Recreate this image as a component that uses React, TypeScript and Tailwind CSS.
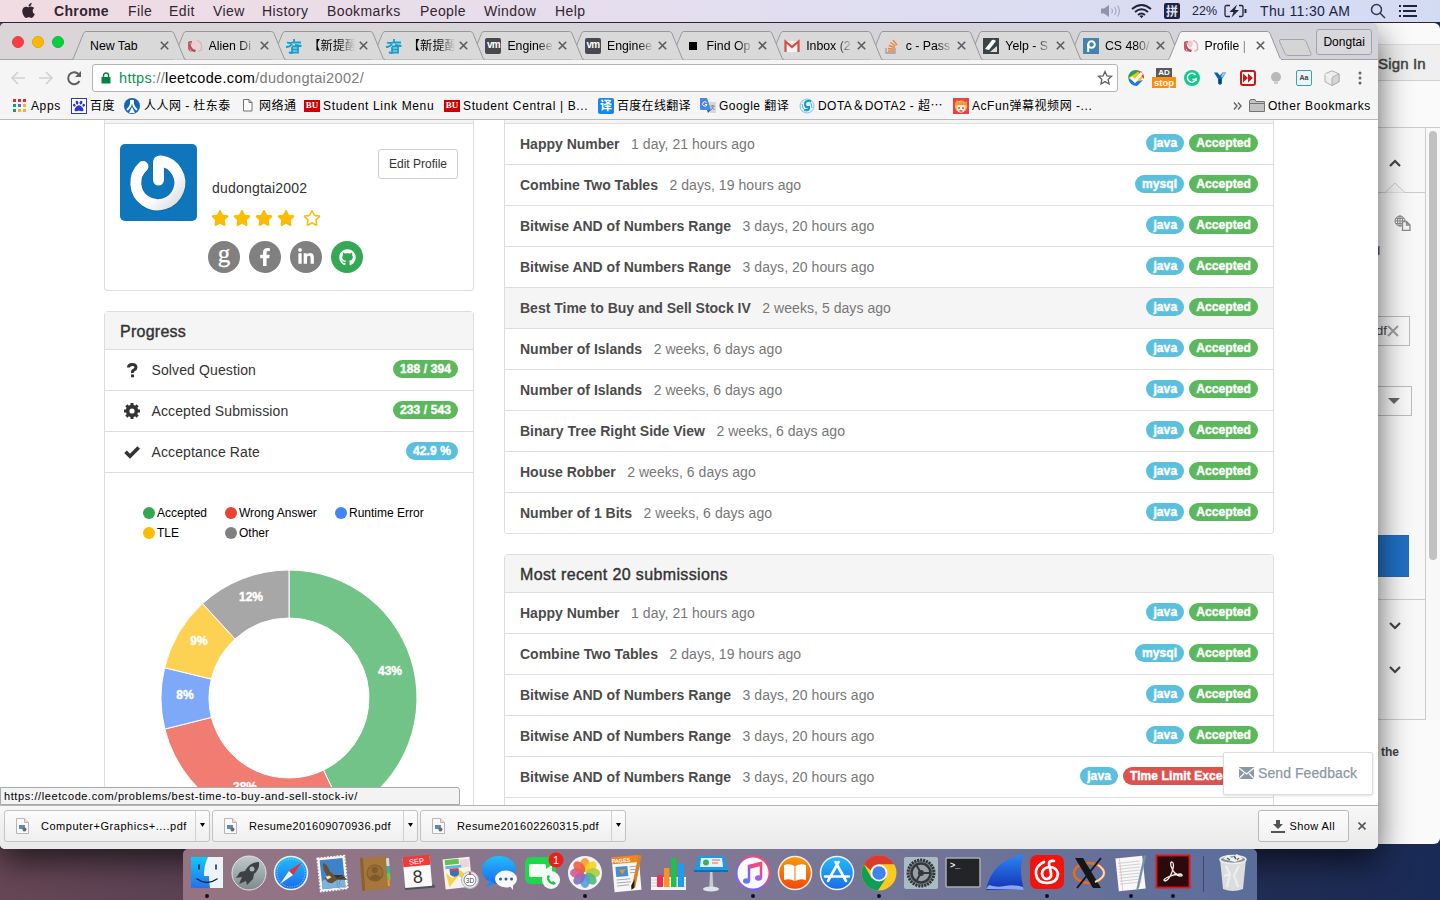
import React from "react";
import { FaApple, FaFacebookF, FaGithub, FaLinkedinIn, FaPaw, FaRegStar, FaStar } from "react-icons/fa";

/* ---------- macOS menu bar ---------- */

const menus = [
  { label: "Chrome", cls: "w-[74px] font-bold tracking-[0.35px]" },
  { label: "File", cls: "w-[41px]" },
  { label: "Edit", cls: "w-[44px]" },
  { label: "View", cls: "w-[49px]" },
  { label: "History", cls: "w-[65px]" },
  { label: "Bookmarks", cls: "w-[93px]" },
  { label: "People", cls: "w-[64px]" },
  { label: "Window", cls: "w-[71px]" },
  { label: "Help", cls: "w-[60px]" },
];

function MenuBar() {
  return (
    <header className="relative z-30 flex h-[23px] items-center border-b border-[#2b2338] bg-gradient-to-r from-[#f0dce2] via-[#e3def0] to-[#d3dbf3] text-[14px] tracking-[0.4px] whitespace-nowrap text-[#33242e]">
      <FaApple className="mr-[17px] mb-[2px] ml-[20px] h-[17px] w-[17px]" />
      {menus.map((m) => (
        <span key={m.label} className={m.cls}>
          {m.label}
        </span>
      ))}
      <div className="ml-auto flex items-center text-[#20233f]">
        <svg className="mr-[9px] h-[16px] w-[22px]" viewBox="0 0 22 16" fill="none" stroke="#a5abc4" strokeWidth="1.2">
          <path d="M1 5.500h3l5-3.500v12l-5-3.500h-3z" fill="#8f94ad" stroke="none" />
          <path d="M11.500 5.500q1.800 2.500 0 5M14.500 4q3 4 0 8M17.500 2.500q4 5.500 0 11" />
        </svg>
        <svg className="mr-[12px] h-[16px] w-[21px]" viewBox="0 0 21 16" fill="none" stroke="#20233f" strokeWidth="2">
          <path d="M1 6q9.500-8 19 0M4 9q6.500-5.500 13 0M7 12q3.500-3 7 0" />
          <path d="M8.500 13l2 2.200 2-2.200q-2-1.600-4 0z" fill="#20233f" stroke="none" />
        </svg>
        <span className="mr-[12px] flex h-[16px] w-[16px] items-center justify-center rounded-[2px] bg-[#20233f] font-['Noto_Sans_CJK_SC',sans-serif] text-[12px] leading-none font-bold tracking-normal text-[#dce0f3]">
          拼
        </span>
        <span className="w-[32px] text-[12.5px] tracking-normal">22%</span>
        <svg className="mr-[14px] h-[16px] w-[23px]" viewBox="0 0 23 16" fill="none" stroke="#20233f" strokeWidth="1.300">
          <path d="M6 2.500H2.500q-1.500 0-1.500 1.500v8q0 1.500 1.500 1.500H6M15 2.500h2.500q1.500 0 1.500 1.500v8q0 1.500-1.500 1.500H15" />
          <path d="M13 1.500L5.500 9h4L7.500 14.500 15 7h-4z" fill="#20233f" stroke="none" />
          <path d="M21.500 6v4" strokeWidth="2" />
        </svg>
        <span className="-ml-px mr-px w-[109px] tracking-[0.35px]">Thu 11:30 AM</span>
        <svg className="mr-[13px] h-[16px] w-[16px]" viewBox="0 0 16 16" fill="none" stroke="#33374f" strokeWidth="1.500">
          <circle cx="6.500" cy="6.500" r="5" />
          <path d="M10 10l5 5" />
        </svg>
        <svg className="mr-[22px] h-[12px] w-[19px]" viewBox="0 0 19 12" fill="#20233f">
          <path d="M0 0h2v2H0zM0 5h2v2H0zM0 10h2v2H0zM4 0h14v2H4zM4 5h13v2H4zM4 10h14v2H4z" />
        </svg>
      </div>
    </header>
  );
}

/* ---------- tab strip ---------- */

function LeetIcon() {
  return (
    <svg className="h-4 w-4" viewBox="0 0 16 16">
      <path d="M1 4l2-1 1 5-1 4 2 2q-4-1-4-4z" fill="#c8596c" />
      <path d="M5 3q5-2 5 3l-2 4q-3-1-3-3z" fill="#eecdd1" />
      <path d="M3 7l3 4 3 1-1 2q-4 0-5-4z" fill="#b9475a" />
      <path d="M3 3h2l-1 4z" fill="#b9475a" />
      <path d="M10 2.500q4 1 4.500 5v4l-3 2" fill="none" stroke="#e3b3b9" strokeWidth="1.500" />
    </svg>
  );
}
function FishIcon() {
  return (
    <svg className="h-4 w-4" viewBox="0 0 16 16" fill="none" stroke="#12a0d0" strokeWidth="1.800">
      <path d="M1 4.500q3 1 6 0h8M8 1v3.500M0 9q4 0 6-3M15.500 8L9 7M6 9v5.500h6V8.500H6M6 11.500h6M8 14q-3 2-5 0" />
    </svg>
  );
}
function VmIcon() {
  return (
    <span className="flex h-4 w-4 items-center justify-center rounded-[2px] bg-[#47494f] pb-[2px] text-[10px] leading-none font-bold tracking-[-0.8px] text-white">
      vm
    </span>
  );
}
function SquareIcon() {
  return <span className="ml-[4px] block h-[8px] w-[8px] bg-black" />;
}
function GmailIcon() {
  return (
    <svg className="h-4 w-4" viewBox="0 0 16 16">
      <path d="M1 3h14v11H1z" fill="#f3f3f3" />
      <path d="M1.500 14V3.500L8 9l6.500-5.500V14" fill="none" stroke="#d94b3f" strokeWidth="2.200" />
    </svg>
  );
}
function StackIcon() {
  return (
    <svg className="h-4 w-4" viewBox="0 0 16 16" fill="none">
      <path d="M2 10v5h9v-5" stroke="#9a9ca0" strokeWidth="1.300" />
      <path d="M4 13h6M4 10.500l6 .800M4.800 7.500l6 2M6.500 4.500l5 3.500M9 2l4 5" stroke="#ef8236" strokeWidth="1.400" />
    </svg>
  );
}
function SlashIcon() {
  return (
    <svg className="h-4 w-4" viewBox="0 0 16 16">
      <path d="M0 0h16v16H0z" fill="#3c4347" />
      <path d="M2 11L9 2q2-1 4 1L6 12z" fill="#fff" />
      <path d="M7 14l7-6v6z" fill="#ddd" />
    </svg>
  );
}
function PiazzaIcon() {
  return (
    <svg className="h-4 w-4" viewBox="0 0 16 16">
      <path d="M0 0h16v16H0z" fill="#4484ac" />
      <circle cx="8.500" cy="6.500" r="3.300" fill="none" stroke="#fff" strokeWidth="2" />
      <path d="M5.200 6v8" stroke="#fff" strokeWidth="2" />
    </svg>
  );
}

const tabs: { title: string; icon: React.ReactNode; active?: boolean }[] = [
  { title: "New Tab", icon: null },
  { title: "Alien Di", icon: <LeetIcon /> },
  { title: "【新提醒", icon: <FishIcon /> },
  { title: "【新提醒", icon: <FishIcon /> },
  { title: "Enginee", icon: <VmIcon /> },
  { title: "Enginee", icon: <VmIcon /> },
  { title: "Find Op", icon: <SquareIcon /> },
  { title: "Inbox (2", icon: <GmailIcon /> },
  { title: "c - Pass", icon: <StackIcon /> },
  { title: "Yelp - S", icon: <SlashIcon /> },
  { title: "CS 480/", icon: <PiazzaIcon /> },
  { title: "Profile |", icon: <LeetIcon />, active: true },
];

function TabStrip() {
  return (
    <div className="flex h-[37px] items-end border-b border-[#a3a3a5] bg-gradient-to-r from-[#dbd5d8] to-[#d2d3da] pl-[12px]">
      <div className="mb-[11px] flex w-[60px] items-center">
        <span className="mr-[8px] h-3 w-3 rounded-full border border-[#e0443e] bg-[#fc3d47]" />
        <span className="mr-[8px] h-3 w-3 rounded-full border border-[#e3a511] bg-[#fdb900]" />
        <span className="h-3 w-3 rounded-full border border-[#14b82c] bg-[#05d13f]" />
      </div>
      {tabs.map((t, i) => (
        <div
          key={i}
          className="relative mb-[-1px] h-[29px] w-[99.600px] shrink-0"
          style={{ zIndex: t.active ? 20 : 12 - i }}
        >
          <svg className="absolute top-0 left-0 h-[29px] w-[114px]" viewBox="0 0 114 29">
            <path
              d="M0 28.500Q1 28.500 1.500 27L11.500 2.500Q12.300 .5 14 .5H99.500Q101 .5 102 2.500L112 27Q112.500 28.500 114 28.500"
              fill={t.active ? "#f5f5f5" : "#d9d9da"}
              stroke="#98989b"
            />
            {t.active ? <path d="M1 29h112v-1.200H1z" fill="#f5f5f5" /> : null}
          </svg>
          <div className="relative flex h-full items-center">
            {t.icon ? <div className="ml-[15px] flex w-[22px] items-center">{t.icon}</div> : <div className="w-[18px]" />}
            <span
              className={
                (t.icon
                  ? "w-[47px] [mask-image:linear-gradient(to_right,black_65%,transparent)] "
                  : "w-[66px] ") +
                "overflow-hidden font-['Liberation_Sans','Noto_Sans_CJK_SC',sans-serif] text-[12.300px] leading-[18px] whitespace-nowrap text-black"
              }
            >
              {t.title}
            </span>
            <svg className="ml-[4px] h-[9px] w-[9px]" viewBox="0 0 9 9" stroke="#5c5c5e" strokeWidth="1.600">
              <path d="M.8.8l7.400 7.400M8.200.8L.8 8.200" />
            </svg>
          </div>
        </div>
      ))}
      <svg className="mb-[3px] ml-[11px] h-[17px] w-[34px]" viewBox="0 0 34 17">
        <path d="M3 .5h22q2 0 3 2l5 12q.5 2-1.500 2H10q-2 0-3-2L1.500 2.500Q1 .5 3 .5z" fill="#d6d5d6" stroke="#a4a4a8" />
      </svg>
      <div className="mb-[4px] ml-[4px] flex h-[26px] w-[56px] items-center justify-center rounded-[3px] border border-[#a3a3a9] bg-[#d7d7dc] text-[12px] text-black">
        Dongtai
      </div>
    </div>
  );
}

/* ---------- toolbar ---------- */

const extensions: React.ReactNode[] = [
  <svg className="h-[16px] w-[18px]" viewBox="0 0 18 16">
    <path d="M9 0l8 6-8 10L1 8z" fill="#f0c419" />
    <path d="M9 0Q2 0 1 8l5-3 6-4z" fill="#23a455" />
    <path d="M10 0q8 2 7 9l-4-5z" fill="#e8422f" />
    <path d="M1 8q2 8 9 8l6-6-8 2z" fill="#1c79d4" />
    <path d="M4 7l4 4 7-8" fill="none" stroke="#fff" strokeWidth="3" />
  </svg>,
  <div className="flex h-[20px] w-[24px] flex-col items-center">
    <div className="h-[9px] w-[16px] bg-[#58595b] text-center text-[8px] leading-[9px] font-bold text-white">AD</div>
    <div className="h-[11px] w-[24px] bg-[#ff8d0a] text-center text-[9.500px] leading-[11px] font-bold text-white">stop</div>
  </div>,
  <svg className="h-[16px] w-[16px]" viewBox="0 0 16 16">
    <circle cx="8" cy="8" r="8" fill="#0fcb8d" />
    <path d="M11.500 5A4.500 4.500 0 1 0 12 9.500H8.500M12 8v3" fill="none" stroke="#fff" strokeWidth="1.500" />
  </svg>,
  <svg className="h-[16px] w-[16px]" viewBox="0 0 16 16">
    <path d="M2 2.500h3.500L8 5.500l2.500-3H14L10 9v4.500l-2 1.500-2-1.500V9z" fill="#0c63ae" />
    <path d="M9 6l2-3.500h3L10 8z" fill="#8fd0ef" />
    <path d="M7 9h2v4L8 14l-1-1z" fill="#123a78" />
  </svg>,
  <svg className="h-[16px] w-[16px]" viewBox="0 0 16 16">
    <rect x="1" y="1" width="14" height="14" rx="2" fill="#fff" stroke="#cf1616" strokeWidth="2" />
    <path d="M3 3.500L8 8l-5 4.500zM8 3.500L13 8l-5 4.500z" fill="#cf1616" />
  </svg>,
  <svg className="h-[16px] w-[16px]" viewBox="0 0 16 16">
    <circle cx="8" cy="7" r="5" fill="#b9b9b9" />
    <path d="M6 11h4v3H6z" fill="#cfcfcf" />
  </svg>,
  <span className="flex h-[16px] w-[16px] items-center justify-center rounded-[2px] border border-[#2fa6bd] bg-[#eef4f5] text-[7px] font-bold text-[#444]">
    Aa
  </span>,
  <svg className="h-[16px] w-[16px]" viewBox="0 0 16 16" stroke="#b0b0b0">
    <path d="M8 .800l7 3v8l-7 3.700-7-3.700v-8z" fill="#ececec" />
    <path d="M8 7.500l7-3.700v8l-7 3.700z" fill="#d5d5d5" />
    <path d="M1 3.800l7 3.700" fill="none" stroke="#fafafa" />
  </svg>,
  <svg className="h-[14px] w-[4px]" viewBox="0 0 4 14" fill="#666">
    <circle cx="2" cy="2" r="1.500" />
    <circle cx="2" cy="7" r="1.500" />
    <circle cx="2" cy="12" r="1.500" />
  </svg>,
];

function Toolbar() {
  return (
    <div className="flex h-[36px] items-center bg-[#f5f5f5]">
      <svg className="ml-[10px] h-[16px] w-[72px]" viewBox="0 0 72 16" fill="none" strokeWidth="2">
        <path d="M15 8H2M8 2L2 8l6 6M29 8h13M36 2l6 6-6 6" stroke="#d2d2d2" strokeWidth="1.700" />
        <path d="M69.500 11A6 6 0 1 1 68.500 4" stroke="#5f5f5f" />
        <path d="M71 1v6h-6z" fill="#5f5f5f" />
      </svg>
      <div className="ml-[10px] flex h-[28px] w-[1026px] items-center rounded-[3px] border border-[#b5b5b5] bg-white pl-[8px]">
        <svg className="h-[12px] w-[10px]" viewBox="0 0 10 12">
          <path d="M1 5h8q.5 0 .5.500v5.500q0 .500-.5.500H1q-.5 0-.5-.500V5.500Q.5 5 1 5z" fill="#0b8043" />
          <path d="M2.500 5.500V3.500a2.500 2.500 0 0 1 5 0v2" fill="none" stroke="#0b8043" strokeWidth="1.500" />
        </svg>
        <span className="mt-px ml-[8px] text-[14.500px] tracking-[0.320px] text-[#7c7c7c]">
          <span className="text-[#0b9150]">https</span>://<span className="text-black">leetcode.com</span>/dudongtai2002/
        </span>
        <svg className="mr-[4px] ml-auto h-[16px] w-[16px]" viewBox="0 0 16 16" fill="none" stroke="#626262" strokeWidth="1.300">
          <path d="M8 1.500l1.900 4.300 4.600.500-3.400 3.100 1 4.600L8 11.600 3.900 14l1-4.600L1.500 6.300l4.600-.500z" />
        </svg>
      </div>
      <div className="ml-[4px] flex items-center">
        {extensions.map((e, i) => (
          <div key={i} className="flex w-[28px] justify-center">
            {e}
          </div>
        ))}
      </div>
    </div>
  );
}

function BuIcon() {
  return (
    <span className="flex h-[12px] w-[16px] items-center justify-center bg-[#cc0000] font-['Liberation_Serif',serif] text-[9px] leading-none font-bold tracking-normal text-white">
      BU
    </span>
  );
}

const bookmarks: { label: string; cls: string; icon: React.ReactNode }[] = [
  {
    label: "Apps",
    cls: "w-[58px] gap-[5px] tracking-[0.6px]",
    icon: (
      <svg className="h-[13px] w-[13px]" viewBox="0 0 13 13">
        <path d="M0 0h3v3H0zM5 0h3v3H5zM10 0h3v3h-3z" fill="#e32d20" />
        <path d="M0 5h3v3H0z" fill="#18a05b" />
        <path d="M5 5h3v3H5z" fill="#2c7be5" />
        <path d="M10 5h3v3h-3zM5 10h3v3H5zM10 10h3v3h-3z" fill="#fab01c" />
        <path d="M0 10h3v3H0z" fill="#18a05b" />
      </svg>
    ),
  },
  {
    label: "百度",
    cls: "w-[53px] gap-[3px]",
    icon: (
      <span className="flex h-[16px] w-[16px] items-center justify-center border border-[#2a35d8] bg-white">
        <FaPaw className="h-[12px] w-[12px] text-[#2a35d8]" />
      </span>
    ),
  },
  {
    label: "人人网 - 杜东泰",
    cls: "w-[118px] gap-[4px]",
    icon: (
      <svg className="h-4 w-4" viewBox="0 0 16 16">
        <circle cx="8" cy="8" r="8" fill="#1465b5" />
        <path d="M7 2q1 6-4 10M9 2q-1 6 4 10" stroke="#fff" strokeWidth="2" fill="none" />
        <path d="M8 9l3 6H5z" fill="#fff" />
      </svg>
    ),
  },
  {
    label: "网络通",
    cls: "w-[62px] gap-[6px] pl-[1px]",
    icon: (
      <svg className="h-[13px] w-[10px]" viewBox="0 0 10 13" fill="#fdfdfd" stroke="#737373">
        <path d="M.5.5h5.500l3 3v8.500H.5zM6 .5v3h3" />
      </svg>
    ),
  },
  { label: "Student Link Menu", cls: "w-[140px] gap-[3px] tracking-[0.66px]", icon: <BuIcon /> },
  { label: "Student Central | B...", cls: "w-[154px] gap-[3px] tracking-[0.64px]", icon: <BuIcon /> },
  {
    label: "百度在线翻译",
    cls: "w-[102px] gap-[3px] tracking-[0.3px]",
    icon: (
      <span className="flex h-4 w-4 items-center justify-center rounded-[2px] bg-[#1686f5] text-[12px] leading-none font-bold tracking-normal text-white">译</span>
    ),
  },
  {
    label: "Google 翻译",
    cls: "w-[99px] gap-[3px]",
    icon: (
      <svg className="h-4 w-4" viewBox="0 0 16 16">
        <path d="M7 4h9v11h-6z" fill="#d5d7da" />
        <path d="M0 0h7l4 12H1q-1 0-1-1z" fill="#4a86ec" />
        <path d="M7 12h4l-3 3z" fill="#2a5cc4" />
        <path d="M6.500 4.500A2.200 2.200 0 1 0 7 6.500H5" fill="none" stroke="#fff" />
        <path d="M10.500 8h4M12.500 7v1M11 12l3-4M11.500 9l3 3" stroke="#7d8288" fill="none" />
      </svg>
    ),
  },
  {
    label: "DOTA＆DOTA2 - 超⋯",
    cls: "w-[154px] gap-[3px]",
    icon: (
      <svg className="h-4 w-4" viewBox="0 0 16 16" fill="none">
        <circle cx="8" cy="8" r="7" fill="#e3f4fb" stroke="#7fc7e2" />
        <path d="M12 3Q6 2 6 6t4 3q1 4-5 3" stroke="#1b9bcb" strokeWidth="2.200" />
        <path d="M3 6q0 5 4 7M13 10q0-5-3-7" stroke="#56b6dc" />
      </svg>
    ),
  },
  {
    label: "AcFun弹幕视频网 -...",
    cls: "w-[150px] gap-[3px] tracking-[0.55px]",
    icon: (
      <svg className="h-4 w-4" viewBox="0 0 16 16">
        <path d="M0 0h16v16H0z" fill="#e8434c" />
        <circle cx="8" cy="8.500" r="6" fill="#f7c25b" />
        <circle cx="8" cy="10.500" r="4" fill="#fdeadb" />
        <path d="M2 5l2-3 3 3 2-3 3 3 2-2v4H2z" fill="#f29a38" />
        <path d="M6 9v2M10 9v2M6.500 13h3" stroke="#7a2c22" />
      </svg>
    ),
  },
];

function BookmarksBar() {
  return (
    <div className="flex h-[24px] items-center border-b border-[#bababa] bg-[#f5f5f5] pb-[4px] pl-[13px] font-['Liberation_Sans','Noto_Sans_CJK_SC',sans-serif] text-[12px] tracking-[0.450px] whitespace-nowrap text-black">
      {bookmarks.map((b) => (
        <div key={b.label} className={"flex h-[20px] shrink-0 items-center " + b.cls}>
          {b.icon}
          <span>{b.label}</span>
        </div>
      ))}
      <svg className="ml-auto h-[8px] w-[9px]" viewBox="0 0 9 8" fill="none" stroke="#666" strokeWidth="1.400">
        <path d="M1 .5L4 4 1 7.500M5 .5L8 4 5 7.500" />
      </svg>
      <svg className="ml-[7px] h-[13px] w-[16px]" viewBox="0 0 16 13" fill="#c4c4c4" stroke="#747474">
        <path d="M.5 12.500V2L1.500.5h4.500l1 2h8.500v10z" />
        <path d="M.5 4.500h15" />
      </svg>
      <span className="mr-[7px] ml-[3px] tracking-[0.650px]">Other Bookmarks</span>
    </div>
  );
}

/* ---------- page ---------- */

const DONUT = [
  { value: 42.9, color: "#72c387", label: "43%", x: 229, y: 105 },
  { value: 28.2, color: "#f17c72", label: "28%", x: 84, y: 221 },
  { value: 7.7, color: "#7ea9f9", label: "8%", x: 24, y: 129 },
  { value: 9.4, color: "#fdd152", label: "9%", x: 38, y: 75 },
  { value: 11.8, color: "#a7a7a7", label: "12%", x: 90, y: 31 },
];

function Donut() {
  let acc = 0;
  const at = (r: number, pct: number) => {
    const a = (pct / 100) * Math.PI * 2;
    return `${128 + r * Math.sin(a)} ${128 - r * Math.cos(a)}`;
  };
  return (
    <svg className="ml-[56px] h-[256px] w-[256px]" viewBox="0 0 256 256">
      {DONUT.map((s) => {
        const from = acc;
        acc += s.value;
        return (
          <path
            key={s.label}
            d={`M${at(128, from)}A128 128 0 0 1 ${at(128, acc)}L${at(80, acc)}A80 80 0 0 0 ${at(80, from)}Z`}
            fill={s.color}
            stroke="#fff"
          />
        );
      })}
      {DONUT.map((s) => (
        <text key={s.label} x={s.x} y={s.y} textAnchor="middle" fill="#fff" stroke="#fff" strokeWidth=".4" fontSize="12" fontWeight="bold">
          {s.label}
        </text>
      ))}
    </svg>
  );
}

function Pill({ tone, children }: { tone: "green" | "blue" | "red"; children: React.ReactNode }) {
  const bg = tone === "green" ? "bg-[#5cb85c]" : tone === "blue" ? "bg-[#5bc0de]" : "bg-[#d9534f]";
  return (
    <span className={"flex h-[18px] items-center rounded-full px-[7px] text-[12px] font-bold tracking-[0.1px] text-white [-webkit-text-stroke:0.400px_white] " + bg}>
      {children}
    </span>
  );
}

const legend = [
  ["Accepted", "bg-[#34a853]", "w-[82px]"],
  ["Wrong Answer", "bg-[#ea4335]", "w-[110px]"],
  ["Runtime Error", "bg-[#4285f4]", "w-[100px]"],
  ["TLE", "bg-[#fbbc05]", "w-[82px]"],
  ["Other", "bg-[#808080]", "w-[110px]"],
];

function QuestionGlyph() {
  return (
    <svg className="h-[16px] w-[16px]" viewBox="0 0 16 16" fill="none" stroke="#333" strokeWidth="3">
      <path d="M4.500 5.500Q4.500 2.500 8.200 2.500T12 5.300Q12 7 10 8T8.500 11" />
      <path d="M7 12.500h3v2.800H7z" fill="#333" stroke="none" />
    </svg>
  );
}
function GearGlyph() {
  return (
    <svg className="h-[16px] w-[16px]" viewBox="0 0 16 16" fill="none" stroke="#333">
      <circle cx="8" cy="8" r="4.400" strokeWidth="3.600" />
      {[0, 45, 90, 135].map((a) => (
        <path key={a} d="M8 0v3M8 13v3" strokeWidth="3" transform={`rotate(${a} 8 8)`} />
      ))}
    </svg>
  );
}
function CheckGlyph() {
  return (
    <svg className="h-[16px] w-[16px]" viewBox="0 0 16 16" fill="none" stroke="#333" strokeWidth="3.700">
      <path d="M1.500 7.800L6 12.200 14.700 3.500" />
    </svg>
  );
}

const progress: { icon: React.ReactNode; label: string; value: string; tone: "green" | "blue" }[] = [
  { icon: <QuestionGlyph />, label: "Solved Question", value: "188 / 394", tone: "green" },
  { icon: <GearGlyph />, label: "Accepted Submission", value: "233 / 543", tone: "green" },
  { icon: <CheckGlyph />, label: "Acceptance Rate", value: "42.9 %", tone: "blue" },
];

function LeftColumn() {
  return (
    <div className="w-[370px]">
      <section className="h-[171px] rounded-b border border-t-0 border-[#ddd]">
        <div className="h-[4px] border-b border-[#ddd] bg-[#f5f5f5]" />
        <div className="flex pt-[20px] pl-[15px]">
          <svg className="h-[77px] w-[77px] shrink-0 rounded-[5px]" viewBox="0 0 77 77">
            <defs>
              <linearGradient id="ring" x1="0" y1="0" x2="1" y2="1">
                <stop offset=".6" stopColor="#fff" />
                <stop offset="1" stopColor="#d9dcde" />
              </linearGradient>
            </defs>
            <path d="M0 0h77v77H0z" fill="#0f76bc" />
            <path d="M23 23A22 22 0 1 0 41 17.500Q38.500 17 38.500 19V36" fill="none" stroke="#0b5d96" strokeWidth="12" strokeLinecap="round" strokeLinejoin="round" opacity=".5" />
            <path d="M23 22.500A22 22 0 1 0 41 17Q38.500 16.500 38.500 18.500V36" fill="none" stroke="url(#ring)" strokeWidth="11" strokeLinecap="round" strokeLinejoin="round" />
          </svg>
          <div className="w-[170px] pt-[34px] text-[#333]">
            <div className="ml-[15px] h-[20px] text-[14px] leading-[20px] tracking-[0.2px]">dudongtai2002</div>
            <div className="mt-[11px] ml-[14px] flex text-[#fbbc05]">
              <FaStar className="mr-[4px] h-[18px] w-[18px]" />
              <FaStar className="mr-[4px] h-[18px] w-[18px]" />
              <FaStar className="mr-[4px] h-[18px] w-[18px]" />
              <FaStar className="mr-[8px] h-[18px] w-[18px]" />
              <FaRegStar className="h-[18px] w-[18px]" />
            </div>
            <div className="mt-[13px] ml-[11px] flex gap-[9px] pt-px text-white">
              <span className="flex h-[32px] w-[32px] items-center justify-center rounded-full bg-[#808080] pb-[7px] font-['Liberation_Serif',serif] text-[25px] leading-none [-webkit-text-stroke:0.300px_white]">
                g
              </span>
              <span className="flex h-[32px] w-[32px] items-center justify-center rounded-full bg-[#808080]">
                <FaFacebookF className="h-[18px] w-[18px]" />
              </span>
              <span className="flex h-[32px] w-[32px] items-center justify-center rounded-full bg-[#808080]">
                <FaLinkedinIn className="mb-px h-[18px] w-[18px]" />
              </span>
              <span className="flex h-[32px] w-[32px] items-center justify-center rounded-full bg-[#34a853]">
                <FaGithub className="h-[17px] w-[17px]" />
              </span>
            </div>
          </div>
          <button className="mt-[5px] ml-[11px] h-[30px] w-[80px] rounded-[3px] border border-[#ccc] text-[12px] text-[#333]">Edit Profile</button>
        </div>
      </section>

      <section className="mt-[20px] h-[600px] rounded border border-[#ddd] bg-white">
        <h2 className="flex h-[38px] items-center border-b border-[#ddd] bg-[#f5f5f5] pt-[2px] pl-[15px] text-[16px] tracking-[0.250px] text-[#333] [-webkit-text-stroke:0.400px_#333]">
          Progress
        </h2>
        {progress.map((p) => (
          <div key={p.label} className="flex h-[41px] items-center border-b border-[#ddd] pr-[15px] pl-[16px] text-[#333]">
            <span className="flex w-[22px] justify-center">{p.icon}</span>
            <span className="ml-[8.500px] text-[14px] tracking-[0.120px]">{p.label}</span>
            <span className="mb-[2px] ml-auto">
              <Pill tone={p.tone}>{p.value}</Pill>
            </span>
          </div>
        ))}
        <div className="mt-[30px] ml-[38px] flex h-[40px] w-[300px] flex-wrap text-[12px] text-black">
          {legend.map(([label, color, width]) => (
            <div key={label} className={"flex h-[20px] items-center gap-[2px] whitespace-nowrap " + width}>
              <span className={"h-[12px] w-[12px] shrink-0 rounded-full " + color} />
              {label}
            </div>
          ))}
        </div>
        <div className="mt-[27px]">
          <Donut />
        </div>
      </section>
    </div>
  );
}

type Submission = { name: string; ago: string; lang: string; status?: string; hover?: boolean };

const latest: Submission[] = [
  { name: "Happy Number", ago: "1 day, 21 hours ago", lang: "java" },
  { name: "Combine Two Tables", ago: "2 days, 19 hours ago", lang: "mysql" },
  { name: "Bitwise AND of Numbers Range", ago: "3 days, 20 hours ago", lang: "java" },
  { name: "Bitwise AND of Numbers Range", ago: "3 days, 20 hours ago", lang: "java" },
];
const accepted: Submission[] = [
  ...latest,
  { name: "Best Time to Buy and Sell Stock IV", ago: "2 weeks, 5 days ago", lang: "java", hover: true },
  { name: "Number of Islands", ago: "2 weeks, 6 days ago", lang: "java" },
  { name: "Number of Islands", ago: "2 weeks, 6 days ago", lang: "java" },
  { name: "Binary Tree Right Side View", ago: "2 weeks, 6 days ago", lang: "java" },
  { name: "House Robber", ago: "2 weeks, 6 days ago", lang: "java" },
  { name: "Number of 1 Bits", ago: "2 weeks, 6 days ago", lang: "java" },
];
const submissions: Submission[] = [
  ...latest,
  { name: "Bitwise AND of Numbers Range", ago: "3 days, 20 hours ago", lang: "java", status: "Time Limit Exceeded" },
];

function Rows({ items }: { items: Submission[] }) {
  return (
    <>
      {items.map((s, i) => (
        <div
          key={i}
          className={
            "flex h-[41px] items-center border-b border-[#ddd] px-[15px] text-[14px] whitespace-nowrap " +
            (s.hover ? "bg-[#f5f5f5]" : "bg-white")
          }
        >
          <b className="text-[#4b4b4b]">{s.name}</b>
          <span className="ml-[11.500px] tracking-[0.050px] text-[#777]">{s.ago}</span>
          <div className="mb-[2px] ml-auto flex gap-[5px]">
            <Pill tone="blue">{s.lang}</Pill>
            <Pill tone={s.status ? "red" : "green"}>{s.status ?? "Accepted"}</Pill>
          </div>
        </div>
      ))}
    </>
  );
}

function RightColumn() {
  return (
    <div className="w-[770px]">
      <section className="h-[414px] overflow-hidden rounded-b border border-t-0 border-[#ddd]">
        <div className="h-[4px] border-b border-[#ddd] bg-[#f5f5f5]" />
        <Rows items={accepted} />
      </section>
      <section className="mt-[20px] h-[300px] overflow-hidden rounded-t border border-[#ddd]">
        <h2 className="flex h-[38px] items-center border-b border-[#ddd] bg-[#f5f5f5] pt-[2px] pl-[15px] text-[16px] tracking-[0.370px] text-[#333] [-webkit-text-stroke:0.400px_#333]">
          Most recent 20 submissions
        </h2>
        <Rows items={submissions} />
      </section>
    </div>
  );
}

function Page() {
  return (
    <main className="relative h-[685px] overflow-hidden bg-white">
      <div className="flex gap-[30px] pl-[104px]">
        <LeftColumn />
        <RightColumn />
      </div>
      <div className="absolute top-[632px] left-[1223px] flex h-[43px] w-[150px] items-center rounded-[2px] border border-[#ddd] bg-white pl-[15px] text-[14px] tracking-[0.08px] text-[#8d98a7] shadow-sm [-webkit-text-stroke:0.250px_#8d98a7]">
        <svg className="mr-[4px] mb-[2px] h-[12px] w-[15px]" viewBox="0 0 15 12">
          <path d="M0 0h15v12H0z" fill="#8d98a7" />
          <path d="M0 1l7.500 6L15 1M0 11.500l5-5M15 11.500l-5-5" fill="none" stroke="#fff" strokeWidth="1.200" />
        </svg>
        Send Feedback
      </div>
      <div className="absolute top-[667px] left-0 flex h-[18px] w-[460px] items-center rounded-tr-[3px] border border-[#a9a9a9] bg-[#f3f3f3] pl-[3px] text-[11px] tracking-[0.590px] text-black">
        https://leetcode.com/problems/best-time-to-buy-and-sell-stock-iv/
      </div>
    </main>
  );
}

/* ---------- downloads ---------- */

const downloads = [
  { name: "Computer+Graphics+....pdf", cls: "tracking-[0.530px]" },
  { name: "Resume201609070936.pdf", cls: "tracking-[0.420px]" },
  { name: "Resume201602260315.pdf", cls: "tracking-[0.420px]" },
];

function Downloads() {
  return (
    <footer className="flex h-[44px] items-center border-t border-[#b4b4b4] bg-gradient-to-b from-[#f7f7f7] to-[#e9e9e9] pb-[3px] pl-[4px] text-[11px] tracking-[0.420px] text-black">
      {downloads.map((f) => (
        <div key={f.name} className="mr-[2px] flex h-[32px] w-[206px] items-center rounded-[3px] border border-[#c3c3c3] bg-gradient-to-b from-[#fcfcfc] to-[#efefef]">
          <svg className="ml-[11px] h-[16px] w-[13px]" viewBox="0 0 13 16">
            <path d="M.5.5h8l4 4v11H.5z" fill="#fafafa" stroke="#b7b7b7" />
            <path d="M8.500.5v4h4" fill="#e5e5e5" stroke="#b7b7b7" />
            <path d="M3 7h6v4H3z" fill="#6486c0" />
            <circle cx="8.500" cy="11.500" r="2" fill="#6a6a72" />
          </svg>
          <span className={"ml-[12px] w-[154px] " + f.cls}>{f.name}</span>
          <div className="flex h-[30px] w-[13px] items-center justify-center border-l border-[#cfcfcf]">
            <svg className="mb-[3px] h-[4px] w-[5px]" viewBox="0 0 5 4">
              <path d="M0 0h5L2.500 4z" />
            </svg>
          </div>
        </div>
      ))}
      <div className="ml-auto flex h-[32px] w-[91px] items-center rounded-[3px] border border-[#b9b9b9] bg-gradient-to-b from-[#fcfcfc] to-[#f1f1f1] pl-[12px]">
        <svg className="mr-[4.500px] h-[13px] w-[14px]" viewBox="0 0 14 13" fill="#555">
          <path d="M5 0h4v4h3L7 9 2 4h3zM0 11h14v2H0z" />
        </svg>
        Show All
      </div>
      <svg className="mr-[12px] ml-[9px] h-[8px] w-[8px]" viewBox="0 0 8 8" stroke="#555" strokeWidth="1.600">
        <path d="M.5.5l7 7M7.500.5l-7 7" />
      </svg>
    </footer>
  );
}

/* ---------- window behind ---------- */

function Chevron({ up }: { up?: boolean }) {
  return (
    <svg className="h-[8px] w-[12px]" viewBox="0 0 12 8" fill="none" stroke="#444" strokeWidth="2.200">
      <path d={up ? "M1 7l5-5 5 5" : "M1 1l5 5 5-5"} />
    </svg>
  );
}

function BackWindow() {
  return (
    <div className="absolute top-[23px] left-[1300px] h-[821px] w-[140px] overflow-hidden rounded-r-[6px] bg-[#fafafa] pl-[78px] text-[#444]">
      <div className="h-[22px] border-b border-[#ddd]" />
      <div className="flex h-[36px] items-center border-b border-[#d0d0d0] bg-[#efefef] pt-[3px] text-[15px] tracking-[0.150px] whitespace-nowrap [-webkit-text-stroke:0.500px_#444]">
        Sign In
      </div>
      <div className="h-[47px] border-b border-[#ccc]" />
      <div className="flex h-[592px] bg-[#f8f8f8]">
        <div className="w-[48px] border-r border-b border-[#ccc]">
          <div className="relative flex h-[65px] items-center justify-end border-b border-[#ccc] pt-[5px] pr-[24px]">
            <Chevron up />
            <svg className="absolute right-[20px] -bottom-[1px] h-[11px] w-[20px]" viewBox="0 0 20 11" fill="#f5f5f5" stroke="#ccc">
              <path d="M0 10.500L10 1l10 9.500" />
            </svg>
          </div>
          <div className="flex h-[50px] items-end justify-end pr-[14px] pb-[12px]">
            <svg className="h-[16px] w-[17px]" viewBox="0 0 17 16" fill="none" stroke="#8a8a8a">
              <circle cx="6" cy="6" r="5" />
              <path d="M1 6h10M6 1v10M2 3.500h8M2 8.500h7" />
              <ellipse cx="6" cy="6" rx="2.500" ry="5" />
              <path d="M8.500 6.500h4l3.500 3.500v5.500H8.500zM12.500 6.500V10H16" fill="#f5f5f5" strokeWidth="1.300" />
            </svg>
          </div>
          <div className="h-[73px] text-[13px] leading-[16px]">
            <span className="-ml-[5px]">d</span>
          </div>
          <div className="mr-[15px] flex h-[30px] items-center border border-l-0 border-[#bbb] text-[13px]">
            <span className="-ml-[2px]">df</span>
            <svg className="h-[12px] w-[12px] shrink-0" viewBox="0 0 12 12" stroke="#a0a0a0" strokeWidth="2">
              <path d="M1 1l10 10M11 1L1 11" />
            </svg>
          </div>
          <div className="mt-[40px] mr-[13px] flex h-[30px] items-center justify-end border border-l-0 border-[#bbb] pr-[11px]">
            <svg className="h-[6px] w-[12px]" viewBox="0 0 12 6" fill="#666">
              <path d="M0 0h12L6 6z" />
            </svg>
          </div>
          <div className="mt-[119px] mr-[16px] h-[42px] border border-[#2a68ab] bg-[#2170c4]" />
          <div className="h-[23px] border-b border-[#ccc]" />
          <div className="flex flex-col items-end gap-[36px] pt-[22px] pr-[24px]">
            <Chevron />
            <Chevron />
          </div>
        </div>
        <div className="flex flex-1 justify-center pt-[3px]">
          <div className="h-[429px] w-[8px] rounded-full bg-[#c1c1c1]" />
        </div>
      </div>
      <div className="pt-[24px] pl-[3px] text-[12px] leading-[16px] font-bold">the</div>
    </div>
  );
}

/* ---------- dock ---------- */

const petals = ["#f59a23", "#f7d21e", "#a9ce3a", "#4fb57a", "#4f9fd6", "#7d6cc0", "#c65a9a", "#ef5a45"];

const dock: { icon: React.ReactNode; dot?: boolean }[] = [
  {
    dot: true,
    icon: (
      <>
        <path d="M5 5h32v31H5z" fill="url(#finder)" />
        <path d="M22 5h15v31H24q-1-6-1-12h-5Q18 13 22 5z" fill="#eef3fa" />
        <path d="M13 13v4M30 13v4M11 27q10 7 20 0" fill="none" stroke="#16233a" strokeWidth="1.500" strokeLinecap="round" />
      </>
    ),
  },
  {
    icon: (
      <>
        <circle cx="21" cy="21" r="17" fill="url(#steel)" stroke="#dfe3e5" />
        <path d="M31 10q-9 0-14 9l-5 1-4 6 6-1-3 7 7-3 1 4 6-6 1-5q6-5 5-12z" fill="#3d4144" />
        <circle cx="24" cy="17" r="2.500" fill="#a9b2b5" />
      </>
    ),
  },
  {
    icon: (
      <>
        <circle cx="21" cy="21" r="16.500" fill="url(#sky)" stroke="#eef1f4" strokeWidth="1.500" />
        <circle cx="21" cy="21" r="14" fill="none" stroke="#9fd4f5" strokeDasharray="1 1.500" />
        <path d="M32 10L19 19l4 4z" fill="#f22c2c" />
        <path d="M10 32l9-13 4 4z" fill="#f3f3f3" />
      </>
    ),
  },
  {
    icon: (
      <>
        <g transform="rotate(-6 21 21)">
          <path d="M7 5h27v33H7z" fill="#f7f7f7" stroke="#f7f7f7" strokeWidth="2" strokeDasharray="2 1.200" />
          <path d="M9 7h23v29H9z" fill="#3c83c9" />
          <path d="M9 28q10-6 23 0v8H9z" fill="#79b3e2" />
          <path d="M12 10q4 1 6 9l4 4 8 1 4 5-9-1-6 3-4-1-3-5 3-2q-4-6-3-13z" fill="#6b4f33" />
          <path d="M13 24l4-1 2 2-4 2z" fill="#f0dfc0" />
          <path d="M22 23l8 1 4 5-9-1z" fill="#3f3127" />
        </g>
        <circle cx="32" cy="31" r="7" fill="none" stroke="#777" opacity=".5" />
        <circle cx="32" cy="31" r="4.500" fill="none" stroke="#777" opacity=".5" />
      </>
    ),
  },
  {
    icon: (
      <g transform="rotate(-4 21 21)">
        <path d="M30 7h6v8h-6z" fill="#d9dde0" />
        <path d="M30 15h6v7h-6z" fill="#28b7ae" />
        <path d="M30 22h6v7h-6z" fill="#7ac143" />
        <path d="M30 29h5v6h-5z" fill="#f19a2c" />
        <path d="M7 5h26v33H7z" fill="#a6763d" />
        <path d="M7 5h3v33H7z" fill="#8c6130" />
        <circle cx="21" cy="21" r="8" fill="#9b6c36" stroke="#7f5a2c" />
        <circle cx="21" cy="18" r="3" fill="#7f5a2c" />
        <path d="M15 26q6-7 12 0-6 5-12 0z" fill="#7f5a2c" />
      </g>
    ),
  },
  {
    icon: (
      <g transform="rotate(-5 21 21)">
        <path d="M7 34h30l1 3H8z" fill="#4c5459" />
        <path d="M8 5h27v30H8z" fill="#fafafa" />
        <path d="M8 4h27v10H8z" fill="#f03a3a" />
        <text x="21.500" y="12" textAnchor="middle" fontSize="7.500" fill="#fff">SEP</text>
        <text x="21.500" y="31" textAnchor="middle" fontSize="18" fill="#333">8</text>
      </g>
    ),
  },
  {
    icon: (
      <>
        <g transform="rotate(-6 20 21)">
          <path d="M6 6h27v30H6z" fill="#f6f3ea" />
          <path d="M8 7h14v5H8z" fill="#5fc44f" />
          <path d="M23 8h9v8h-9z" fill="#ecd6dc" />
          <path d="M8 13h16v3H8z" fill="#5cb8e8" />
          <path d="M8 20l6 6 8-8 10 10v4L20 24 10 34z" fill="#f5d341" />
          <path d="M12 17h9v5q-4 5-9 0z" fill="#3c6fc4" />
          <path d="M12 16h9v2h-9z" fill="#e1443e" />
        </g>
        <circle cx="32" cy="28" r="8.500" fill="#e9edf0" stroke="#b6bdc2" />
        <circle cx="32" cy="28" r="6" fill="#fff" stroke="#7a8894" />
        <text x="32" y="30.500" textAnchor="middle" fontSize="6.500" fill="#444">3D</text>
        <path d="M32 20v3" stroke="#e33" strokeWidth="1.500" />
      </>
    ),
  },
  {
    icon: (
      <>
        <ellipse cx="19" cy="18" rx="17" ry="14" fill="url(#sky)" />
        <path d="M9 28q0 5-4 7 6 0 9-4z" fill="#1c8cf0" />
        <ellipse cx="26" cy="27" rx="11" ry="8.500" fill="#f6f8fa" />
        <path d="M29 33l4 5 0-7z" fill="#f6f8fa" />
        <path d="M20.500 27h.01M26 27h.01M31.500 27h.01" stroke="#2f5da4" strokeWidth="3" strokeLinecap="round" />
      </>
    ),
  },
  {
    icon: (
      <>
        <rect x="3" y="5" width="31" height="27" rx="6" fill="#1ed84b" />
        <rect x="7" y="12" width="17" height="13" rx="2" fill="#f4fff6" />
        <path d="M24 17l6-4v11l-6-4z" fill="#f4fff6" />
        <circle cx="29" cy="28" r="9" fill="#f7f7f7" />
        <path d="M25 24q-1 7 7 9l2-2-3-2-1 1q-2-1-3-4l1-1-1-2z" fill="#22c24a" />
        <circle cx="34" cy="8" r="7.500" fill="#f01c1c" />
        <text x="34" y="12" textAnchor="middle" fontSize="11" fill="#fff">1</text>
      </>
    ),
  },
  {
    dot: true,
    icon: (
      <>
        <circle cx="21" cy="21" r="17" fill="#f4f4f4" />
        {petals.map((c, i) => (
          <ellipse key={c} cx="21" cy="13" rx="4.800" ry="7" fill={c} opacity=".88" transform={`rotate(${i * 45} 21 21)`} />
        ))}
      </>
    ),
  },
  {
    icon: (
      <g transform="rotate(-5 21 21)">
        <path d="M7 5h27v34H7z" fill="#f6f6f6" />
        <path d="M7 4h27v7H7z" fill="#ee8722" />
        <text x="16" y="10" textAnchor="middle" fontSize="5.500" fontWeight="bold" fill="#fff">PAGES</text>
        <path d="M10 14h12v10H10z" fill="#3f8fd6" />
        <path d="M13 17h7l-3.500 5z" fill="#f08b25" />
        <path d="M24 15h7M24 18h7M24 21h7M10 27h14M10 30h14M10 33h12" stroke="#aaa" />
        <path d="M34 4l3 1-9 31-3 2 0-4z" fill="#d98223" />
        <path d="M28 28l-1 8-3 2 0-4z" fill="#1c1c1c" />
      </g>
    ),
  },
  {
    icon: (
      <>
        <path d="M3 25h35v13H3z" fill="#f4f4f4" />
        <path d="M3 28h35M3 31h35M3 34h35" stroke="#cfcfcf" />
        <path d="M9 23h6v12H9z" fill="#ee2d56" />
        <path d="M16 16h5.500v19H16z" fill="#f7931e" />
        <path d="M23 6h5.500v29H23z" fill="#1fc14c" />
        <path d="M30 12h6v23h-6z" fill="#1e9cf0" />
      </>
    ),
  },
  {
    icon: (
      <>
        <path d="M9 4h25l4 14H4z" fill="#1c9be4" />
        <path d="M4 18h34v2H4z" fill="#0d6fb5" />
        <path d="M11 6h21l1 9H10z" fill="#e8f4fb" />
        <circle cx="16" cy="10.500" r="3" fill="#2fb56b" />
        <path d="M22 8h8M22 11h6" stroke="#e86a42" />
        <path d="M20 20h2.500l.8 16h-4z" fill="#c7ccd1" />
        <ellipse cx="21" cy="37" rx="8" ry="2.500" fill="#e1e4e7" />
      </>
    ),
  },
  {
    dot: true,
    icon: (
      <>
        <circle cx="21" cy="21" r="16.500" fill="#fafafa" stroke="url(#pinkblue)" strokeWidth="2" />
        <path d="M17 29V14l12-3v15" fill="none" stroke="url(#pinkblue)" strokeWidth="2.500" />
        <path d="M17 13l12-3v4l-12 3z" fill="#f0487f" />
        <ellipse cx="14.500" cy="29" rx="3.500" ry="2.800" fill="#5f7cf0" />
        <ellipse cx="26.500" cy="26" rx="3.500" ry="2.800" fill="#a45cf0" />
      </>
    ),
  },
  {
    icon: (
      <>
        <circle cx="21" cy="21" r="16.500" fill="url(#orange)" stroke="#f3ece8" strokeWidth="1.500" />
        <path d="M10 13q6-2 10.500 1v15Q16 26 10 28zM32 13q-6-2-10.500 1v15q4.500-3 10.500-1z" fill="#fff" />
      </>
    ),
  },
  {
    icon: (
      <>
        <circle cx="21" cy="21" r="16.500" fill="url(#sky)" stroke="#eaf1f7" strokeWidth="1.500" />
        <path d="M22.500 10L12 29M19.500 10L30 29M9 24.500h24" stroke="#fff" strokeWidth="2.600" strokeLinecap="round" />
      </>
    ),
  },
  {
    dot: true,
    icon: (
      <>
        <circle cx="21" cy="21" r="17.500" fill="#fbc91f" />
        <path d="M5.800 12.200A17.500 17.500 0 0 1 36.200 12.200H21a9 9 0 0 0-8.500 6z" fill="#db3a2c" />
        <path d="M5.800 12.200A17.500 17.500 0 0 0 20 38.500L28 26 13.500 26z" fill="#109d58" />
        <circle cx="21" cy="21" r="8.500" fill="#f3f6fa" />
        <circle cx="21" cy="21" r="6.700" fill="#3f83ee" />
      </>
    ),
  },
  {
    icon: (
      <>
        <rect x="4" y="5" width="34" height="32" rx="2" fill="#a9bcc6" />
        <circle cx="21" cy="21" r="13" fill="#7b8386" stroke="#2f3336" strokeWidth="3" strokeDasharray="2 1" />
        <circle cx="21" cy="21" r="9.500" fill="#999fa3" stroke="#33383b" strokeWidth="2.500" />
        <path d="M21 21l10 0M21 21L16 12.500M21 21l-5 8.500" stroke="#33383b" strokeWidth="2" />
        <circle cx="21" cy="21" r="3" fill="#33383b" />
      </>
    ),
  },
  {
    icon: (
      <>
        <rect x="4" y="6" width="34" height="29" rx="1" fill="#222427" stroke="#a9adb0" strokeWidth="1.500" />
        <text x="8" y="16" fontSize="9" fontWeight="bold" fill="#eee">&gt;_</text>
      </>
    ),
  },
  {
    icon: (
      <>
        <path d="M2 38Q8 8 40 2q-6 14 0 36z" fill="url(#fin)" />
        <path d="M2 37l3-4q8 3 16 1t18 1l1 3z" fill="#a9c4f7" opacity=".8" />
      </>
    ),
  },
  {
    dot: true,
    icon: (
      <>
        <rect x="4" y="3" width="34" height="34" rx="7" fill="#f2140c" />
        <path d="M18 10Q9 14 10 22q1 9 11 9t11-9q-1-7-9-7-7 1-7 7 1 5 5 5 5-1 4-6l-2-9q0-4 5-3" fill="none" stroke="#fff" strokeWidth="2.700" strokeLinecap="round" />
      </>
    ),
  },
  {
    icon: (
      <>
        <ellipse cx="21" cy="21" rx="15" ry="10" fill="none" stroke="#ee6a1b" strokeWidth="2.500" />
        <path d="M7 6h8l18 30h-8z" fill="#161616" />
        <path d="M33 6L9 36" stroke="#161616" strokeWidth="2" />
        <path d="M30 13q6 4 6 8 0 5-9 9" fill="none" stroke="#f7d9c0" strokeWidth="2" />
      </>
    ),
  },
  {
    dot: true,
    icon: (
      <>
        <g transform="rotate(-6 21 21)">
          <path d="M7 5h27v33H7z" fill="#f8f8f8" />
          <path d="M9 10h22M9 13h22M9 16h22M9 19h22M9 22h22M9 25h22M9 28h22M9 31h22" stroke="#c9c9c9" strokeWidth=".8" />
          <path d="M11 5v33" stroke="#e7a6a6" strokeWidth=".6" />
        </g>
        <path d="M34 3l2 1-7 32-3 3 1-5z" fill="#7893a8" />
      </>
    ),
  },
  {
    dot: true,
    icon: (
      <>
        <rect x="4.500" y="3.500" width="33" height="32" fill="#2b0a0b" stroke="#ef0f0f" strokeWidth="1.800" />
        <path d="M20 10q3 1 0 10-3 8-7 9-3-1 3-4 6-3 13-3 3 2-1 2-6-1-9-10-1-4 1-4z" fill="none" stroke="#f2eded" strokeWidth="1.300" />
      </>
    ),
  },
];

function DockIcon({ children }: { children: React.ReactNode }) {
  return (
    <svg className="h-[42px] w-[42px]" viewBox="0 0 42 42">
      {children}
    </svg>
  );
}

function Dock() {
  return (
    <div className="absolute top-[849px] left-[183px] flex h-[51px] w-[1074px] rounded-t-[5px] bg-gradient-to-r from-[#967381] via-[#7f7894] to-[#5b6d9b] pt-[3px] pl-[3px]">
      <svg className="absolute h-0 w-0">
        <defs>
          <linearGradient id="finder" x1="0" y1="0" x2="0" y2="1"><stop stopColor="#11c8fd" /><stop offset="1" stopColor="#2571ee" /></linearGradient>
          <linearGradient id="steel" x1="0" y1="0" x2="0" y2="1"><stop stopColor="#c1cbcc" /><stop offset="1" stopColor="#7f898c" /></linearGradient>
          <linearGradient id="sky" x1="0" y1="0" x2="0" y2="1"><stop stopColor="#22bdfb" /><stop offset="1" stopColor="#1b6bec" /></linearGradient>
          <linearGradient id="orange" x1="0" y1="0" x2="0" y2="1"><stop stopColor="#fb9a0a" /><stop offset="1" stopColor="#f0470c" /></linearGradient>
          <linearGradient id="fin" x1="0" y1="0" x2="0" y2="1"><stop stopColor="#2f86f5" /><stop offset="1" stopColor="#1232b4" /></linearGradient>
          <linearGradient id="pinkblue" x1="0" y1="1" x2="1" y2="0"><stop stopColor="#c04df0" /><stop offset=".3" stopColor="#5f6cf5" /><stop offset=".6" stopColor="#e0489e" /><stop offset="1" stopColor="#fa4a6e" /></linearGradient>
        </defs>
      </svg>
      {dock.map((d, i) => (
        <div key={i} className="flex w-[42px] shrink-0 flex-col items-center">
          <DockIcon>{d.icon}</DockIcon>
          {d.dot ? <span className="h-1 w-1 rounded-full bg-[#160d1c]" /> : null}
        </div>
      ))}
      <div className="mt-[4px] ml-[9px] h-[36px] w-px bg-[#3e4868]" />
      <div className="ml-[8px]">
        <DockIcon>
          <path d="M8 7l3 30q10 4 20 0l3-30q-13 5-26 0z" fill="#dcdddf" />
          <ellipse cx="21" cy="7.500" rx="13" ry="4" fill="#8b9094" stroke="#eceded" strokeWidth="1.500" />
          <path d="M11 7l5-4 4 3 5-4 6 5-8 3z" fill="#f2f2f2" />
          <path d="M15 6l3 2M22 4l2 3" stroke="#2b6f8f" strokeWidth="1.500" />
          <path d="M27 6l-2 2" stroke="#b0603a" strokeWidth="1.500" />
          <path d="M14 14l4 8-3 13M27 14l-5 9 4 12M12 24l6-2" fill="none" stroke="#efeff0" strokeWidth="2" />
        </DockIcon>
      </div>
    </div>
  );
}

export default function App() {
  return (
    <div className="relative h-[900px] w-[1440px] overflow-hidden bg-gradient-to-r from-[#674755] via-[#3c3350] to-[#182a55] font-['Liberation_Sans',Arial,sans-serif]">
      <MenuBar />
      <BackWindow />
      <div className="absolute top-[23px] left-0 h-[826px] w-[1378px] rounded-[5px] shadow-[0_12px_32px_rgba(0,0,0,0.65)]">
        <div className="flex h-full flex-col overflow-hidden rounded-[5px] bg-[#f5f5f5]">
          <TabStrip />
          <Toolbar />
          <BookmarksBar />
          <Page />
          <Downloads />
        </div>
      </div>
      <Dock />
    </div>
  );
}
